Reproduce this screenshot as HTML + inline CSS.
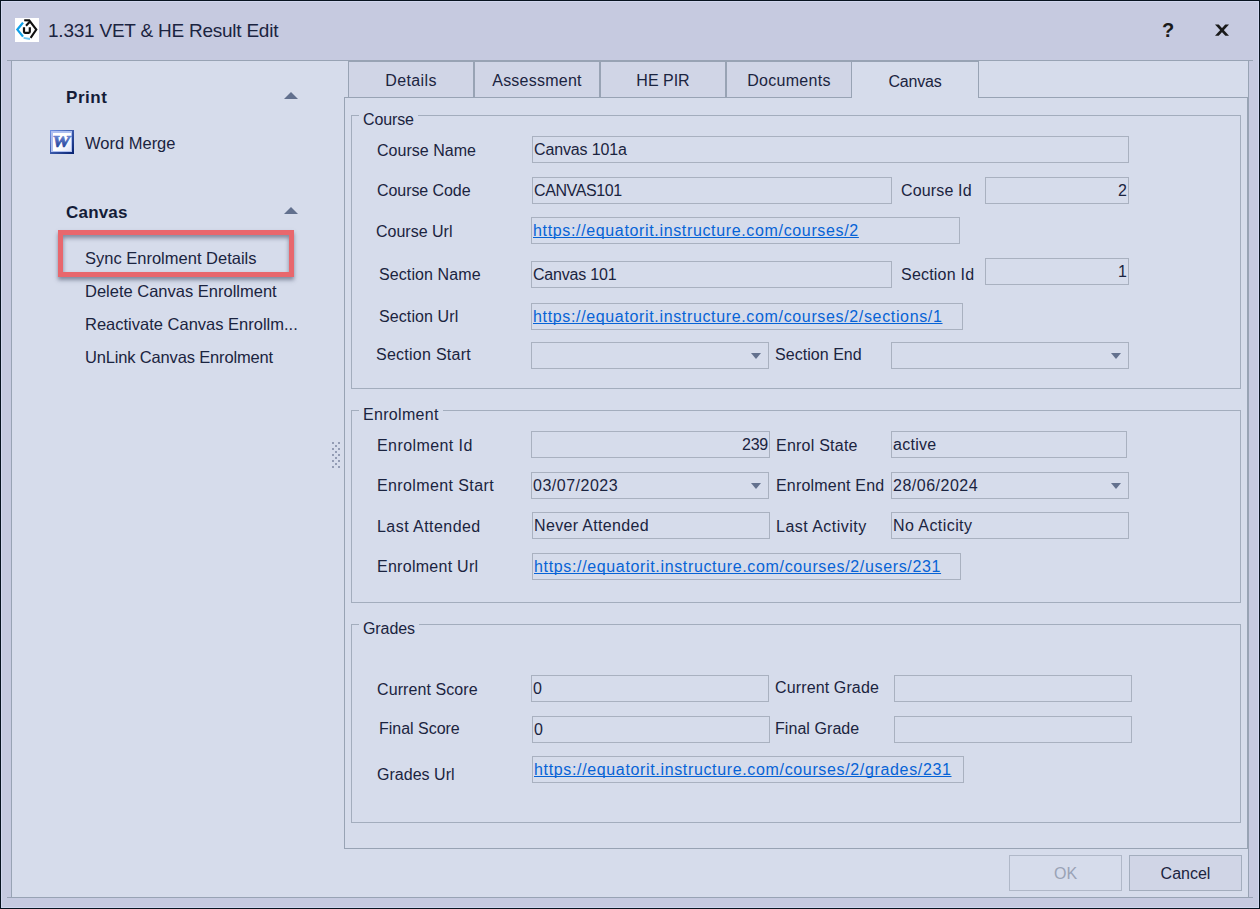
<!DOCTYPE html>
<html lang="en">
<head>
<meta charset="utf-8">
<title>1.331 VET &amp; HE Result Edit</title>
<style>
html,body{margin:0;padding:0;}
body{width:1260px;height:909px;overflow:hidden;background:#c6cae0;font-family:"Liberation Sans",sans-serif;color:#1b2440;position:relative;}
div,span,i{box-sizing:border-box;}
.win{position:absolute;left:0;top:0;width:1260px;height:909px;border:1px solid #07131f;box-shadow:inset 0 0 0 1px #d1d7ef;}
.abs{position:absolute;}
.title{position:absolute;left:48px;top:20px;font-size:19px;letter-spacing:-.23px;line-height:22px;white-space:nowrap;color:#1b2440;}
.panel{position:absolute;left:11px;top:60px;width:1238px;height:838px;background:#d6dceb;border:1px solid #98a3b4;}
.hl{position:absolute;height:1px;background:#98a3b4;}
.vl{position:absolute;width:1px;background:#98a3b4;}
.nav-h{position:absolute;left:66px;font-size:17px;font-weight:bold;line-height:20px;letter-spacing:.2px;color:#141c38;}
.nav-i{position:absolute;left:85px;font-size:16.5px;line-height:20px;white-space:nowrap;}
.up{position:absolute;left:284px;width:0;height:0;border-left:7px solid transparent;border-right:7px solid transparent;border-bottom:7.5px solid #62708e;}
.tab{position:absolute;top:61px;height:37px;width:126px;border:1px solid #98a3b4;background:#d0d5e6;text-align:center;font-size:16px;line-height:38px;}
.tab.act{background:#d6dceb;border-bottom:none;height:37px;padding-top:1px;letter-spacing:-.2px;}
.page{position:absolute;left:344px;top:97px;width:904px;height:752px;border:1px solid #98a3b4;}
.gb{position:absolute;border:1px solid #a3adbd;}
.lg{position:absolute;left:7px;top:-6px;padding:0 4px 0 4px;background:#d6dceb;font-size:16px;line-height:20px;}
.lb{position:absolute;font-size:16px;line-height:20px;white-space:nowrap;}
.in{position:absolute;height:27px;border:1px solid #a9b1c0;background:#d6dceb;font-size:16px;line-height:26px;padding:0 1px;white-space:nowrap;overflow:hidden;}
.in.r{text-align:right;}
.lnk{color:#0763d6;text-decoration:underline;text-decoration-skip-ink:none;text-underline-offset:1px;text-decoration-thickness:1px;letter-spacing:.65px;}
.dd{position:absolute;right:7px;top:10px;width:0;height:0;border-left:5.5px solid transparent;border-right:5.5px solid transparent;border-top:6.5px solid #63718e;}
.dot{position:absolute;width:2px;height:2px;background:#939cb4;}
.btn{position:absolute;top:855px;width:113px;height:36px;border:1px solid #a3adbd;text-align:center;font-size:16px;line-height:36px;}
</style>
</head>
<body>
<div class="win"></div>
<div class="title">1.331 VET &amp; HE Result Edit</div>
<svg class="abs" style="left:15px;top:18px" width="24" height="24" viewBox="0 0 24 24">
<rect width="24" height="24" fill="#fff"/>
<polyline points="8,4.6 2.4,11.6 8,18.6" fill="none" stroke="#0e9fe8" stroke-width="2.3" stroke-linejoin="miter"/>
<line x1="8.6" y1="19.8" x2="15" y2="21" stroke="#6ac6f4" stroke-width="1.8"/>
<polyline points="9.2,2.2 14.2,2.4 21.3,11.6 15.6,19.8" fill="none" stroke="#111" stroke-width="2.1"/>
<line x1="11" y1="7.8" x2="14.6" y2="4" stroke="#111" stroke-width="2.1"/>
<path d="M9 9.2V13.8Q9 14.8 10 14.8H13.8Q14.8 14.8 14.8 13.8V9.2" fill="none" stroke="#111" stroke-width="2.2"/>
</svg>
<div class="abs" style="left:1162px;top:19px;font-size:20px;font-weight:bold;line-height:22px;color:#1a1a1a">?</div>
<svg class="abs" style="left:1214px;top:23px" width="16" height="14" viewBox="0 0 16 14">
<polygon points="1,1.5 4.7,1.5 15,12.7 11.3,12.7" fill="#1a1a1a"/>
<polygon points="15,1.5 11.3,1.5 1,12.7 4.7,12.7" fill="#1a1a1a"/>
</svg>
<div class="panel"></div>
<div class="hl" style="left:7px;top:60px;width:1246px"></div>
<div class="hl" style="left:7px;top:897px;width:1246px"></div>

<div class="nav-h" style="top:88px;letter-spacing:.55px">Print</div><i class="up" style="top:92px"></i>
<svg class="abs" style="left:50px;top:130px" width="24" height="24" viewBox="0 0 24 24">
<defs>
<linearGradient id="wb" x1="0" y1="0" x2="1" y2="1"><stop offset="0" stop-color="#6f92e6"/><stop offset="1" stop-color="#05206f"/></linearGradient>
<linearGradient id="wi" x1="0" y1="0" x2="1" y2="1"><stop offset="0" stop-color="#ffffff"/><stop offset=".55" stop-color="#ffffff"/><stop offset="1" stop-color="#dfe4f7"/></linearGradient>
<linearGradient id="ww" x1="0" y1="0" x2="0" y2="1"><stop offset="0" stop-color="#7f9ae3"/><stop offset="1" stop-color="#0b2a86"/></linearGradient>
</defs>
<rect width="24" height="24" fill="url(#wb)"/>
<rect x="1" y="1" width="21" height="21" fill="#aebff0"/>
<rect x="3" y="3" width="18" height="18" fill="url(#wi)"/>
<text x="11.2" y="17.2" text-anchor="middle" font-family="Liberation Serif, serif" font-size="17" font-weight="bold" font-style="italic" fill="url(#ww)" stroke="url(#ww)" stroke-width=".7" textLength="18" lengthAdjust="spacingAndGlyphs">W</text>
</svg>
<div class="nav-i" style="top:133px">Word Merge</div>
<div class="nav-h" style="top:203px">Canvas</div><i class="up" style="top:207px"></i>
<div class="nav-i" style="top:248px">Sync Enrolment Details</div>
<div class="nav-i" style="top:281px">Delete Canvas Enrollment</div>
<div class="nav-i" style="top:314px">Reactivate Canvas Enrollm...</div>
<div class="nav-i" style="top:347px;letter-spacing:-.16px">UnLink Canvas Enrolment</div>
<div class="abs" style="left:58px;top:230px;width:236px;height:47px;border:5px solid #e8676d;box-shadow:0 3px 4px rgba(60,70,95,.55), inset 0 3px 4px rgba(60,70,95,.55)"></div>

<div class="page"></div>
<i class="dot" style="left:332px;top:442px"></i><i class="dot" style="left:338px;top:442px"></i><i class="dot" style="left:335px;top:445px"></i><i class="dot" style="left:332px;top:448px"></i><i class="dot" style="left:338px;top:448px"></i><i class="dot" style="left:335px;top:451px"></i><i class="dot" style="left:332px;top:454px"></i><i class="dot" style="left:338px;top:454px"></i><i class="dot" style="left:335px;top:457px"></i><i class="dot" style="left:332px;top:460px"></i><i class="dot" style="left:338px;top:460px"></i><i class="dot" style="left:335px;top:463px"></i><i class="dot" style="left:332px;top:466px"></i><i class="dot" style="left:338px;top:466px"></i>
<div class="tab" style="left:348px;letter-spacing:.37px">Details</div>
<div class="tab" style="left:474px;letter-spacing:.24px">Assessment</div>
<div class="tab" style="left:600px">HE PIR</div>
<div class="tab" style="left:726px;letter-spacing:.3px">Documents</div>
<div class="tab act" style="left:851px;width:128px">Canvas</div>
<div class="gb" style="left:351px;top:115px;width:890px;height:274px"><span class="lg" style="letter-spacing:-0.13px">Course</span></div>
<div class="gb" style="left:351px;top:410px;width:890px;height:193px"><span class="lg" style="letter-spacing:0.31px">Enrolment</span></div>
<div class="gb" style="left:351px;top:624px;width:890px;height:199px"><span class="lg" style="letter-spacing:-0.08px">Grades</span></div>
<div class="lb" style="left:377px;top:141px;letter-spacing:0.03px">Course Name</div>
<div class="lb" style="left:377px;top:181px;letter-spacing:-0.07px">Course Code</div>
<div class="lb" style="left:901px;top:181px;letter-spacing:0.15px">Course Id</div>
<div class="lb" style="left:376px;top:222px;letter-spacing:0.0px">Course Url</div>
<div class="lb" style="left:379px;top:265px;letter-spacing:0.1px">Section Name</div>
<div class="lb" style="left:901px;top:265px;letter-spacing:0.21px">Section Id</div>
<div class="lb" style="left:379px;top:307px;letter-spacing:0.1px">Section Url</div>
<div class="lb" style="left:376px;top:345px;letter-spacing:0.26px">Section Start</div>
<div class="lb" style="left:775px;top:345px;letter-spacing:0.04px">Section End</div>
<div class="lb" style="left:377px;top:436px;letter-spacing:0.42px">Enrolment Id</div>
<div class="lb" style="left:776px;top:436px;letter-spacing:0.23px">Enrol State</div>
<div class="lb" style="left:377px;top:476px;letter-spacing:0.39px">Enrolment Start</div>
<div class="lb" style="left:776px;top:476px;letter-spacing:0.19px">Enrolment End</div>
<div class="lb" style="left:377px;top:517px;letter-spacing:0.45px">Last Attended</div>
<div class="lb" style="left:776px;top:517px;letter-spacing:0.48px">Last Activity</div>
<div class="lb" style="left:377px;top:557px;letter-spacing:0.27px">Enrolment Url</div>
<div class="lb" style="left:377px;top:680px;letter-spacing:0.09px">Current Score</div>
<div class="lb" style="left:775px;top:678px;letter-spacing:0.13px">Current Grade</div>
<div class="lb" style="left:379px;top:719px;letter-spacing:-0.02px">Final Score</div>
<div class="lb" style="left:775px;top:719px;letter-spacing:0.06px">Final Grade</div>
<div class="lb" style="left:377px;top:765px;letter-spacing:0.03px">Grades Url</div>
<div class="in" style="left:532px;top:136px;width:597px;letter-spacing:-0.14px">Canvas 101a</div>
<div class="in" style="left:532px;top:177px;width:360px;letter-spacing:-0.41px">CANVAS101</div>
<div class="in r" style="left:985px;top:177px;width:144px">2</div>
<div class="in" style="left:531px;top:217px;width:429px"><span class="lnk">https://equatorit.instructure.com/courses/2</span></div>
<div class="in" style="left:531px;top:261px;width:361px;letter-spacing:-0.2px">Canvas 101</div>
<div class="in r" style="left:985px;top:258px;width:144px">1</div>
<div class="in" style="left:531px;top:303px;width:432px"><span class="lnk">https://equatorit.instructure.com/courses/2/sections/1</span></div>
<div class="in" style="left:531px;top:342px;width:238px"><i class="dd"></i></div>
<div class="in" style="left:891px;top:342px;width:238px"><i class="dd"></i></div>
<div class="in r" style="left:531px;top:431px;width:239px;letter-spacing:-0.23px">239</div>
<div class="in" style="left:891px;top:431px;width:236px;letter-spacing:0.27px">active</div>
<div class="in" style="left:531px;top:472px;width:238px;letter-spacing:0.51px">03/07/2023<i class="dd"></i></div>
<div class="in" style="left:891px;top:472px;width:238px;letter-spacing:0.51px">28/06/2024<i class="dd"></i></div>
<div class="in" style="left:532px;top:512px;width:238px;letter-spacing:0.34px">Never Attended</div>
<div class="in" style="left:891px;top:512px;width:238px;letter-spacing:0.43px">No Acticity</div>
<div class="in" style="left:532px;top:553px;width:429px"><span class="lnk">https://equatorit.instructure.com/courses/2/users/231</span></div>
<div class="in" style="left:531px;top:675px;width:238px">0</div>
<div class="in" style="left:894px;top:675px;width:238px"></div>
<div class="in" style="left:532px;top:716px;width:238px">0</div>
<div class="in" style="left:894px;top:716px;width:238px"></div>
<div class="in" style="left:532px;top:756px;width:432px"><span class="lnk">https://equatorit.instructure.com/courses/2/grades/231</span></div>
<div class="btn" style="left:1009px;color:#9aa3b6;border-color:#b0b8c8">OK</div>
<div class="btn" style="left:1129px;background:#d0d5e6">Cancel</div>
</body>
</html>
